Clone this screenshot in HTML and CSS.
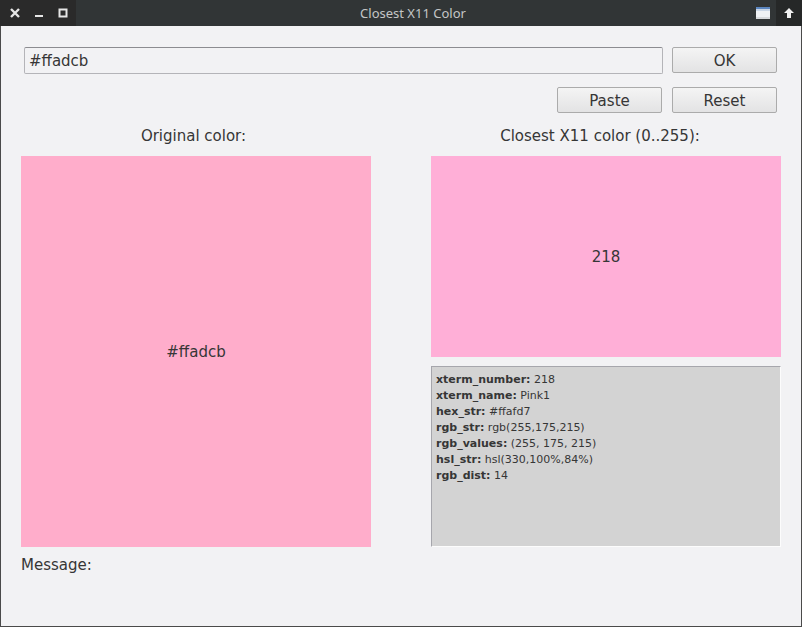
FILE: index.html
```html
<!DOCTYPE html>
<html>
<head>
<meta charset="utf-8">
<link rel="stylesheet" href="styles.css">
</head>
<body>
<div class="window">
  <div class="titlebar">
    <div class="tb-left">
      <span class="tb-btn"><svg width="12" height="12" viewBox="0 0 12 12"><path d="M2 2 L10 10 M10 2 L2 10" stroke="#e6e6e6" stroke-width="2.4"/></svg></span>
      <span class="tb-btn"><svg width="12" height="12" viewBox="0 0 12 12"><rect x="2" y="8" width="8" height="2" fill="#e6e6e6"/></svg></span>
      <span class="tb-btn"><svg width="12" height="12" viewBox="0 0 12 12"><rect x="2.5" y="2.5" width="7" height="7" fill="none" stroke="#e6e6e6" stroke-width="2"/></svg></span>
    </div>
    <div class="tb-title">Closest X11 Color</div>
    <div class="tb-right">
      <span class="tb-app"><svg width="14" height="12" viewBox="0 0 14 12"><rect x="0" y="0" width="14" height="12" fill="#eef1f4"/><rect x="0" y="0" width="14" height="2" fill="#5b86c0"/><rect x="0" y="2" width="14" height="2" fill="#c9d6e6"/><rect x="0" y="10" width="14" height="2" fill="#d6d9dc"/></svg></span>
      <span class="tb-up"><svg width="12" height="12" viewBox="0 0 12 12"><path d="M6 1 L11 6 H8 V11 H4 V6 H1 Z" fill="#f0f0f0"/></svg></span>
    </div>
  </div>
  <div class="content">
    <div class="input-row">
      <div class="field">#ffadcb</div>
      <button class="btn">OK</button>
    </div>
    <div class="btn-row">
      <button class="btn">Paste</button>
      <button class="btn">Reset</button>
    </div>
    <div class="panels">
      <div class="col">
        <div class="label label-left">Original color:</div>
        <div class="swatch big orig">#ffadcb</div>
      </div>
      <div class="col">
        <div class="label label-right">Closest X11 color (0..255):</div>
        <div class="swatch small x11">218</div>
        <div class="info">
          <div><b>xterm_number:</b> 218</div>
          <div><b>xterm_name:</b> Pink1</div>
          <div><b>hex_str:</b> #ffafd7</div>
          <div><b>rgb_str:</b> rgb(255,175,215)</div>
          <div><b>rgb_values:</b> (255, 175, 215)</div>
          <div><b>hsl_str:</b> hsl(330,100%,84%)</div>
          <div><b>rgb_dist:</b> 14</div>
        </div>
      </div>
    </div>
    <div class="message">Message:</div>
  </div>
</div>
</body>
</html>
```
FILE: styles.css
```css
html, body {
  margin: 0;
  padding: 0;
  background: #f2f2f4;
}
.window {
  width: 802px;
  height: 627px;
  box-sizing: border-box;
  border: 1px solid #4a4a4a;
  border-top: none;
  display: flex;
  flex-direction: column;
  font-family: "DejaVu Sans", sans-serif;
  color: #363636;
  background: #f2f2f4;
}
.titlebar {
  height: 26px;
  margin: 0 -1px;
  display: flex;
  align-items: stretch;
  background: #313536;
}
.tb-left {
  width: 76px;
  background: #2a2a2a;
  display: flex;
  align-items: center;
  padding-left: 9px;
  gap: 12px;
  box-sizing: border-box;
}
.tb-btn {
  width: 12px;
  height: 12px;
  display: flex;
}
.tb-title {
  flex: 1;
  text-align: center;
  font-family: "Noto Sans", sans-serif;
  font-size: 13px;
  line-height: 26px;
  color: #c4c6c6;
}
.tb-right {
  display: flex;
  align-items: stretch;
}
.tb-app {
  width: 26px;
  display: flex;
  align-items: center;
  justify-content: center;
}
.tb-up {
  width: 26px;
  background: #262828;
  display: flex;
  align-items: center;
  justify-content: center;
}
.content {
  flex: 1;
  display: flex;
  flex-direction: column;
  padding: 21px 20px 0 20px;
  font-size: 15px;
}
.input-row {
  display: flex;
  gap: 9px;
  padding: 0 4px 0 3px;
  height: 27px;
}
.field {
  flex: 1;
  box-sizing: border-box;
  border: 1px solid #b4b4b8;
  border-top-color: #8c8c90;
  border-radius: 2px;
  padding: 1px 4px 0;
  line-height: 24px;
  color: #363636;
}
.btn {
  width: 105px;
  height: 26px;
  box-sizing: border-box;
  border: 1px solid #ababab;
  border-radius: 2px;
  background: linear-gradient(#f4f4f4, #e3e3e4);
  font-family: "DejaVu Sans", sans-serif;
  font-size: 15px;
  color: #363636;
  padding: 2px 0 0;
  margin: 0;
}
.btn-row {
  display: flex;
  justify-content: flex-end;
  gap: 10px;
  padding-right: 4px;
  margin-top: 13px;
}
.panels {
  display: grid;
  grid-template-columns: 350px 350px;
  column-gap: 60px;
  margin-top: 10px;
}
.col {
  display: flex;
  flex-direction: column;
}
.label {
  text-align: center;
  height: 33px;
  box-sizing: border-box;
  padding-top: 2px;
  line-height: 22px;
}
.label-left { padding-right: 5px; }
.label-right { padding-right: 12px; }
.swatch {
  display: flex;
  align-items: center;
  justify-content: center;
}
.big { height: 391px; }
.small { height: 201px; }
.orig { background: #ffadcb; }
.x11 { background: #ffafd7; }
.info {
  margin-top: 9px;
  height: 181px;
  box-sizing: border-box;
  background: #d3d3d3;
  border: 1px solid #fcfcfc;
  border-top-color: #a6a6ac;
  border-left-color: #a6a6ac;
  padding: 5px 4px;
  font-size: 11px;
  line-height: 16px;
  color: #363636;
}
.info b { font-weight: bold; }
.message {
  margin-top: 8px;
  line-height: 20px;
}
```
